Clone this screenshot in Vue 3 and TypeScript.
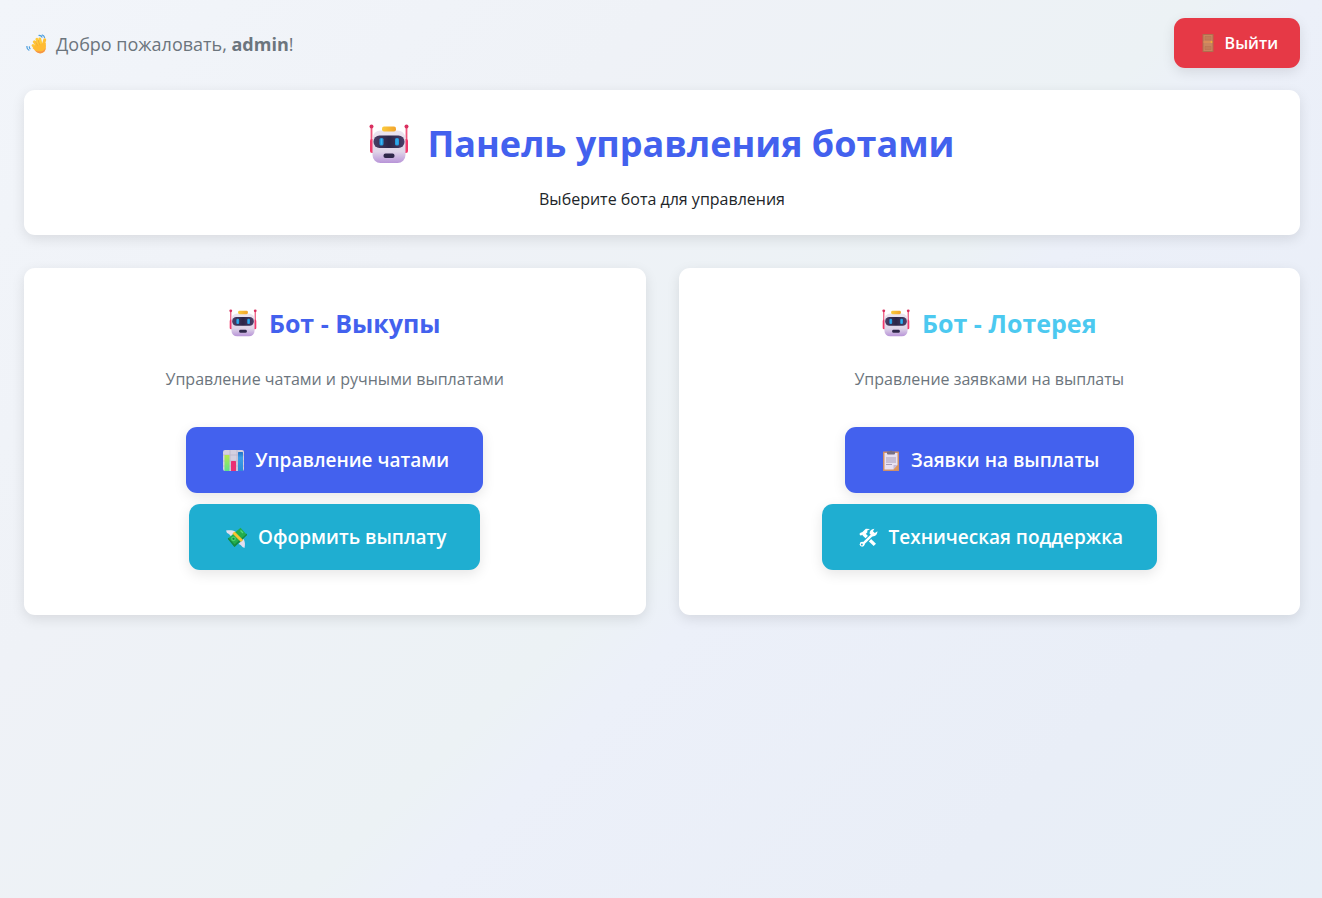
<script setup lang="ts">
interface BotAction {
  label: string
  icon: 'chart' | 'money' | 'clipboard' | 'tools'
  tone: 'primary' | 'info'
}

interface Bot {
  name: string
  description: string
  tone: 'primary' | 'sky'
  actions: BotAction[]
}

const userName = 'admin'

const bots: Bot[] = [
  {
    name: 'Бот - Выкупы',
    description: 'Управление чатами и ручными выплатами',
    tone: 'primary',
    actions: [
      { label: 'Управление чатами', icon: 'chart', tone: 'primary' },
      { label: 'Оформить выплату', icon: 'money', tone: 'info' },
    ],
  },
  {
    name: 'Бот - Лотерея',
    description: 'Управление заявками на выплаты',
    tone: 'sky',
    actions: [
      { label: 'Заявки на выплаты', icon: 'clipboard', tone: 'primary' },
      { label: 'Техническая поддержка', icon: 'tools', tone: 'info' },
    ],
  },
]
</script>

<template>
  <svg class="defs" width="0" height="0" aria-hidden="true">
    <defs>
      <linearGradient id="face" x1="0" y1="0" x2="0" y2="1">
        <stop offset="0" stop-color="#ece5f0" />
        <stop offset="0.65" stop-color="#dfd5e8" />
        <stop offset="1" stop-color="#b894d8" />
      </linearGradient>
      <linearGradient id="visor" x1="0" y1="0" x2="1" y2="0">
        <stop offset="0" stop-color="#4a3e66" />
        <stop offset="0.5" stop-color="#2b2547" />
        <stop offset="1" stop-color="#4a3f68" />
      </linearGradient>
      <linearGradient id="cap" x1="0" y1="0" x2="1" y2="0">
        <stop offset="0" stop-color="#fbcb3c" />
        <stop offset="1" stop-color="#f2a32c" />
      </linearGradient>
      <linearGradient id="green-bar" x1="0" y1="0" x2="0" y2="1">
        <stop offset="0" stop-color="#b5e84c" />
        <stop offset="1" stop-color="#5fe08a" />
      </linearGradient>
      <linearGradient id="blue-bar" x1="0" y1="0" x2="0" y2="1">
        <stop offset="0" stop-color="#2273c4" />
        <stop offset="0.3" stop-color="#3d9ee8" />
        <stop offset="1" stop-color="#2e8ad8" />
      </linearGradient>
      <symbol id="robot" viewBox="0 0 40 40">
        <path d="M2.500 3v20M37.500 3v20" stroke="#f0587f" stroke-width="1.800" />
        <circle cx="2.500" cy="2.600" r="2" fill="#d92f5f" />
        <circle cx="37.500" cy="2.600" r="2" fill="#d92f5f" />
        <rect x="1" y="15" width="6" height="14" rx="2" fill="#f2396b" />
        <rect x="33" y="15" width="6" height="14" rx="2" fill="#f2396b" />
        <rect x="3.500" y="6.500" width="33" height="32.500" rx="8" fill="url(#face)" />
        <rect x="13" y="2.500" width="14" height="5" rx="2" fill="url(#cap)" />
        <rect x="4.500" y="11.500" width="31" height="12.500" rx="6" fill="url(#visor)" />
        <rect x="10.500" y="14" width="4" height="7.500" rx="1.600" fill="#249be0" />
        <rect x="26" y="14" width="4" height="7.500" rx="1.600" fill="#249be0" />
        <path d="M12.500 15v5.500M28 15v5.500" stroke="#3fb6f0" stroke-width="1" />
        <rect x="14.500" y="29.500" width="11" height="4.500" rx="2" fill="#2f284a" />
      </symbol>
      <symbol id="chart" viewBox="0 0 21 21">
        <rect width="21" height="21" rx="2" fill="#d5d0e0" />
        <path d="M7 0v21M14 0v21M0 5h21M0 11h21M0 16h21" stroke="#bcb5cc" stroke-width="0.800" />
        <rect x="1.500" y="5" width="5" height="16" rx="0.600" fill="url(#green-bar)" />
        <rect x="8" y="11" width="5" height="10" rx="0.600" fill="#ea2f73" />
        <rect x="15" y="2" width="5" height="19" rx="0.600" fill="url(#blue-bar)" />
      </symbol>
      <symbol id="money" viewBox="0 0 21 21">
        <path d="M0 3.500c3.500-.6 7-.4 9.500 1L5 9.500C4 7.500 2.500 6.500 1 6z" fill="#e3dff0" />
        <path d="M18.500 21c.8-3.500.6-6-.8-9L12.500 17c2 .6 3.200 2 4 3z" fill="#e3dff0" />
        <path d="M1.800 11.800 14.500.7 21 8 8.500 20Z" fill="#22ad4e" />
        <path d="M1.800 11.800 8.500 20 21 8V6.500L8.500 17.500 2.500 10.800Z" fill="#148a42" />
        <circle cx="7.500" cy="11.800" r="2.400" fill="#4bd06d" />
        <circle cx="7.500" cy="11.800" r="1.100" fill="#138843" />
        <path d="M14.500 3.500l2.500 2.500" stroke="#55d879" stroke-width="1.300" />
        <path d="M7.500 5.500 16 14" stroke="#fcc332" stroke-width="3" />
      </symbol>
      <symbol id="clipboard" viewBox="0 0 18 21">
        <rect x="1" y="1.500" width="16" height="19.500" rx="0.600" fill="#cf8f68" />
        <path d="M2.500 3h13v12L11.500 19.500h-9z" fill="#e8e1f2" />
        <path d="M15.500 15 11.500 19.500V15z" fill="#c7b9d7" />
        <path d="M15.500 15.500v4h-4z" fill="#e59a56" />
        <path d="M4 8h10M4 10h10M4 12h10M4 14.500h6" stroke="#9f96b2" stroke-width="0.900" />
        <path d="M5 3.500V2.500Q5 1.500 6 1.500h1.500Q9-.5 10.500 1.500H12q1 0 1 1v1q0 1-1 1H6Q5 4.500 5 3.500z" fill="#766f84" />
      </symbol>
      <symbol id="tools" viewBox="0 0 18 18">
        <path d="M4.500 6 15 16" stroke="#fff" stroke-width="3.200" />
        <path d="M.3 5.800 1.800 4.300 3 4 6.500.7l4 .2L7.700 2.700 8 4 4.500 7.500 3 6.500l-1.300.8z" fill="#fff" />
        <path d="M11.500 7.500 3.500 15.500" stroke="#1faed1" stroke-width="4.200" />
        <path d="M12.500 6.500 3.800 15" stroke="#fff" stroke-width="2.300" />
        <path d="M10 5.300Q10 1 14.600.6L13.200 3l1.800 1.800L17.500 3Q17.500 7.500 12.800 8z" fill="#fff" />
        <circle cx="3" cy="15.400" r="2.300" fill="#fff" />
        <circle cx="2.700" cy="15.700" r="0.900" fill="#1faed1" />
      </symbol>
      <symbol id="wave" viewBox="0 0 21 21">
        <path d="M16 15.500 18.700 5.800" stroke="#ffbf35" stroke-width="3" stroke-linecap="round" />
        <path d="M12 16 7 11.500M12.500 14 8.200 7.800" stroke="#ffc437" stroke-width="2.800" stroke-linecap="round" />
        <path d="M13.500 13 10.800 5.300M15.500 12 13.800 4.800" stroke="#ffcb3b" stroke-width="2.800" stroke-linecap="round" />
        <path d="M9 11.500 16 9.500 19.800 9Q20.500 15.500 18 18q-3.500 2.800-7.500 0L6.500 14z" fill="#ffbb33" />
        <path d="M8.500 16.200 11 18.300q3.500 2.200 7-.5 1.500-1.500 1.800-4.300-1.500 3.500-4.600 3.900-3.500.4-6.700-1.200z" fill="#f58f4c" />
        <path d="M9.600 7 11.500 11.500M12.200 6 13.500 10.500" stroke="#ee9d2e" stroke-width="0.700" />
        <path d="M12.500 1.500q2.600-.4 3.800 2M15.800.8q2.400.8 2.900 3M1 12q-.6 3.200 2.300 4.500M3.500 12.300q-.5 1.700.9 2.800" stroke="#4c9ddd" stroke-width="1.200" fill="none" />
      </symbol>
      <symbol id="door" viewBox="0 0 12 18">
        <rect x="0.500" width="11" height="18" rx="0.500" fill="#b06d4d" />
        <rect x="1.500" y="1" width="9" height="16" fill="#c98560" />
        <path d="M3 2.500h6v3.500H3zM3 12.500h6v3H3z" fill="#c27c59" stroke="#b5714f" stroke-width="0.500" />
        <path d="M1.500 8h8" stroke="#dd9058" stroke-width="1.500" />
        <circle cx="9.500" cy="8" r="0.900" fill="#f6b52f" />
      </symbol>
    </defs>
  </svg>

  <div class="page">
    <header class="topbar">
      <p class="welcome">
        <svg class="wave" aria-hidden="true"><use href="#wave" /></svg>
        <span>Добро пожаловать, <strong>{{ userName }}</strong>!</span>
      </p>
      <button type="button" class="btn logout">
        <svg class="door" aria-hidden="true"><use href="#door" /></svg>
        <span>Выйти</span>
      </button>
    </header>

    <main>
      <section class="card intro">
        <h1>
          <svg class="robot-large" aria-hidden="true"><use href="#robot" /></svg>
          <span>Панель управления ботами</span>
        </h1>
        <p>Выберите бота для управления</p>
      </section>

      <div class="bots">
        <section v-for="bot in bots" :key="bot.name" class="card bot">
          <h2 :class="bot.tone">
            <svg class="robot-small" aria-hidden="true"><use href="#robot" /></svg>
            <span>{{ bot.name }}</span>
          </h2>
          <p>{{ bot.description }}</p>
          <div class="actions">
            <button
              v-for="action in bot.actions"
              :key="action.label"
              type="button"
              class="btn action"
              :class="action.tone"
            >
              <svg :class="action.icon" aria-hidden="true"><use :href="'#' + action.icon" /></svg>
              <span>{{ action.label }}</span>
            </button>
          </div>
        </section>
      </div>
    </main>
  </div>
</template>

<style>
body {
  margin: 0;
}
</style>

<style scoped>
.defs {
  position: absolute;
}

.page {
  box-sizing: border-box;
  min-height: 100vh;
  padding: 18px 22px 22px 24px;
  background: linear-gradient(
    135deg,
    #f2f5fa 0%,
    #eff2f7 30%,
    #ecf2f5 54%,
    #ecf0f9 59%,
    #e9eef7 82%,
    #e7eff7 100%
  );
  font-family: "Segoe UI", "Open Sans", "Noto Sans", sans-serif;
  color: #212529;
}

p,
h1,
h2 {
  margin: 0;
}

.topbar {
  display: flex;
  align-items: center;
  justify-content: space-between;
  margin-bottom: 22px;
}

.welcome {
  display: flex;
  align-items: center;
  gap: 9px;
  padding: 2px 0 0 2px;
  font-size: 18px;
  line-height: 28px;
  color: #6c757d;
}

.btn {
  display: inline-flex;
  align-items: center;
  border: 0;
  border-radius: 11px;
  color: #fff;
  font-family: inherit;
  font-weight: 600;
  box-shadow: 0 4px 13px rgba(0, 0, 0, 0.1);
  cursor: pointer;
}

.logout {
  height: 50px;
  padding: 0 22px 0 28px;
  gap: 11px;
  background: #e63946;
  font-size: 16px;
}

.card {
  border-radius: 11px;
  background: #fff;
  box-shadow: 0 4px 13px rgba(0, 0, 0, 0.1);
  text-align: center;
}

.intro {
  padding: 23px 22px 21px;
  margin-bottom: 33px;
}

h1,
h2 {
  display: flex;
  align-items: center;
  justify-content: center;
  font-weight: 700;
}

h1 {
  gap: 18px;
  margin-bottom: 10px;
  font-size: 36px;
  line-height: 62px;
  color: #4361ee;
}

.intro p {
  font-size: 16px;
  line-height: 29px;
}

.bots {
  display: grid;
  grid-template-columns: repeat(auto-fit, minmax(340px, 1fr));
  gap: 33px;
}

.bot {
  padding: 33px 33px 45px;
}

h2 {
  gap: 12px;
  margin-bottom: 20px;
  font-size: 25px;
  line-height: 44px;
}

h2.primary {
  color: #4361ee;
}

h2.sky {
  color: #4cc9f0;
}

.bot p {
  margin-bottom: 33px;
  font-size: 16px;
  line-height: 29px;
  color: #6c757d;
}

.actions {
  display: flex;
  flex-direction: column;
  align-items: center;
  gap: 11px;
}

.action {
  height: 66px;
  padding: 0 34px 0 37px;
  gap: 11px;
  font-size: 19px;
}

.action.primary {
  background: #4361ee;
}

.action.info {
  background: #1faed1;
}

.robot-large {
  width: 40px;
  height: 40px;
}

.robot-small {
  width: 28px;
  height: 28px;
}

.wave,
.chart,
.money {
  width: 21px;
  height: 21px;
}

.clipboard {
  width: 18px;
  height: 21px;
}

.tools {
  width: 19px;
  height: 19px;
}

.door {
  width: 12px;
  height: 18px;
}
</style>
